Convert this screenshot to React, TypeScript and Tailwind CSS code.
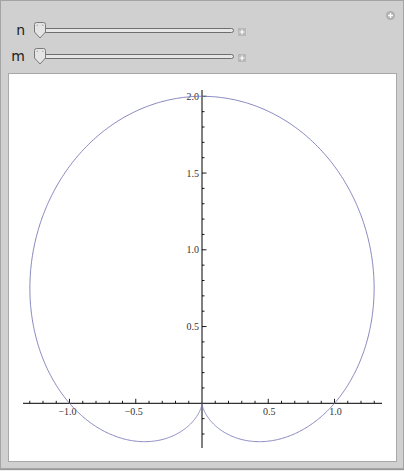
import React from "react";

const X0 = 193;
const Y0 = 329.3;
const SX = 132.5;
const SY = 153.5;

function curvePath() {
  const pts: string[] = [];
  const N = 720;
  for (let i = 0; i <= N; i++) {
    const t = (i / N) * 2 * Math.PI - Math.PI / 2;
    const r = 1 + Math.sin(t);
    const x = r * Math.cos(t);
    const y = r * Math.sin(t);
    pts.push(`${i === 0 ? "M" : "L"}${(X0 + x * SX).toFixed(2)},${(Y0 - y * SY).toFixed(2)}`);
  }
  return pts.join(" ");
}

function Thumb() {
  return (
    <svg width="12" height="17" viewBox="0 0 12 17" className="shrink-0">
      <path
        d="M2.5 0.5 H9.5 Q11.5 0.5 11.5 2.5 V10 L6 16 L0.5 10 V2.5 Q0.5 0.5 2.5 0.5 Z"
        fill="#e4e4e4"
        stroke="#7a7a7a"
        strokeWidth="1"
      />
      <path d="M3 4 V3 H4 M8 3 H9 V4" stroke="#a0a0a0" strokeWidth="0.8" fill="none" />
    </svg>
  );
}

function SliderRow({ label }: { label: string }) {
  return (
    <div className="flex items-center h-[26px]">
      <div
        className="w-[25px] text-right text-[14px] text-[#222] pr-[1px]"
        style={{ fontFamily: '"DejaVu Sans", sans-serif' }}
      >
        {label}
      </div>
      <div className="relative ml-[8px] w-[200px] h-[17px] flex items-center">
        <div className="absolute left-[8px] right-0 top-[6px] h-[5px] rounded-[3px] border border-[#6e6e6e] bg-[#e6e6e6]" />
        <div className="relative">
          <Thumb />
        </div>
      </div>
      <div className="ml-[4px] mt-[3px] w-[8px] h-[8px] bg-[#b8b8b8] flex items-center justify-center">
        <svg width="6" height="6" viewBox="0 0 6 6">
          <path d="M3 0.5 V5.5 M0.5 3 H5.5" stroke="#fff" strokeWidth="1.2" />
        </svg>
      </div>
    </div>
  );
}

function Plot() {
  const xTicks: JSX.Element[] = [];
  for (let i = -13; i <= 13; i++) {
    if (i === 0) continue;
    const v = i / 10;
    const major = i % 5 === 0;
    const px = X0 + v * SX;
    xTicks.push(
      <line key={"x" + i} x1={px} x2={px} y1={Y0} y2={Y0 - (major ? 4.5 : 2.5)} stroke="#000" strokeWidth="0.9" />
    );
  }
  const yTicks: JSX.Element[] = [];
  for (let i = -2; i <= 20; i++) {
    if (i === 0) continue;
    const v = i / 10;
    const major = i % 5 === 0;
    const py = Y0 - v * SY;
    yTicks.push(
      <line key={"y" + i} x1={X0} x2={X0 + (major ? 4.5 : 2.5)} y1={py} y2={py} stroke="#000" strokeWidth="0.9" />
    );
  }
  const xLabels = [-1.0, -0.5, 0.5, 1.0];
  const yLabels = [0.5, 1.0, 1.5, 2.0];
  const fmt = (v: number) => (v < 0 ? "\u2212" : "") + Math.abs(v).toFixed(1);
  return (
    <svg width="388" height="387" viewBox="0 0 388 387" className="block">
      <line x1={14} x2={373} y1={Y0} y2={Y0} stroke="#000" strokeWidth="1" />
      <line x1={X0} x2={X0} y1={16} y2={374} stroke="#000" strokeWidth="1" />
      {xTicks}
      {yTicks}
      {xLabels.map((v) => (
        <text
          key={"xl" + v}
          x={X0 + v * SX + (v < 0 ? -2 : 1)}
          y={Y0 + 12}
          textAnchor="middle"
          fontSize="10"
          fill="#333"
          style={{ fontFamily: '"Liberation Serif", serif' }}
        >
          {fmt(v)}
        </text>
      ))}
      {yLabels.map((v) => (
        <text
          key={"yl" + v}
          x={X0 - 3}
          y={Y0 - v * SY + 3.5}
          textAnchor="end"
          fontSize="10"
          fill="#333"
          style={{ fontFamily: '"Liberation Serif", serif' }}
        >
          {fmt(v)}
        </text>
      ))}
      <path d={curvePath()} fill="none" stroke="#7a7ab8" strokeWidth="0.9" />
    </svg>
  );
}

export default function App() {
  return (
    <div className="w-[404px] h-[471px] bg-white">
      <div className="relative w-[404px] h-[469px] bg-[#d0d0d0] border border-[#a4a4a4] shadow-[0_1px_1px_#9a9a9a] flex flex-col">
        <div className="absolute right-[8px] top-[10px] w-[9px] h-[9px] rounded-full bg-[#b0b0b0] flex items-center justify-center">
          <svg width="7" height="7" viewBox="0 0 7 7">
            <path d="M3.5 1 V6 M1 3.5 H6" stroke="#fff" strokeWidth="1.4" />
          </svg>
        </div>
        <div className="pt-[16px] pl-[0px] h-[72px]">
          <SliderRow label="n" />
          <SliderRow label="m" />
        </div>
        <div className="ml-[7px] w-[389px] h-[389px] bg-white border border-[#a8a8a8]">
          <Plot />
        </div>
      </div>
    </div>
  );
}
